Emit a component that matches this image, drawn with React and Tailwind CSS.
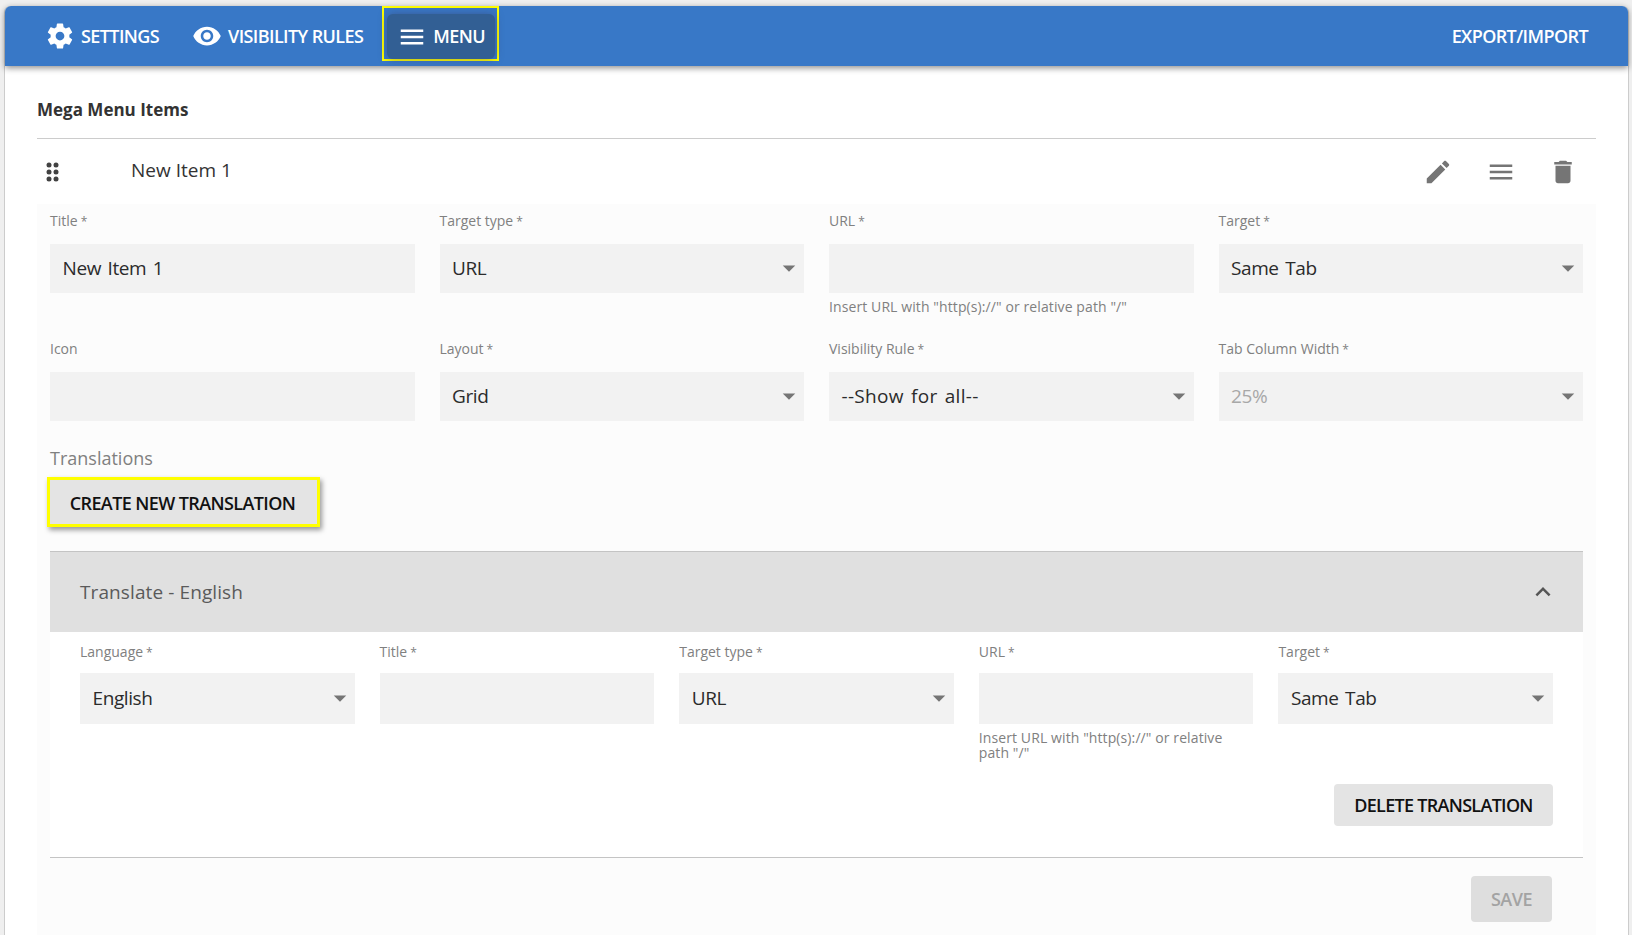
const icons = {
  settings:
    "M19.43 12.98c.04-.32.07-.64.07-.98s-.03-.66-.07-.98l2.11-1.65c.19-.15.24-.42.12-.64l-2-3.46c-.12-.22-.39-.3-.61-.22l-2.49 1c-.52-.4-1.08-.73-1.69-.98l-.38-2.65C14.46 2.18 14.25 2 14 2h-4c-.25 0-.46.18-.49.42l-.38 2.65c-.61.25-1.17.59-1.69.98l-2.49-1c-.23-.09-.49 0-.61.22l-2 3.46c-.13.22-.07.49.12.64l2.11 1.65c-.04.32-.07.65-.07.98s.03.66.07.98l-2.11 1.65c-.19.15-.24.42-.12.64l2 3.46c.12.22.39.3.61.22l2.49-1c.52.4 1.08.73 1.69.98l.38 2.65c.03.24.24.42.49.42h4c.25 0 .46-.18.49-.42l.38-2.65c.61-.25 1.17-.59 1.69-.98l2.49 1c.23.09.49 0 .61-.22l2-3.46c.12-.22.07-.49-.12-.64l-2.11-1.65zM12 15.5c-1.93 0-3.5-1.57-3.5-3.5s1.57-3.5 3.5-3.5 3.5 1.57 3.5 3.5-1.57 3.5-3.5 3.5z",
  eye: "M12 4.5C7 4.5 2.73 7.61 1 12c1.73 4.39 6 7.5 11 7.5s9.27-3.11 11-7.5c-1.73-4.39-6-7.5-11-7.5zM12 17c-2.76 0-5-2.24-5-5s2.24-5 5-5 5 2.24 5 5-2.24 5-5 5zm0-8c-1.66 0-3 1.34-3 3s1.34 3 3 3 3-1.34 3-3-1.34-3-3-3z",
  menu: "M3 18h18v-2H3v2zm0-5h18v-2H3v2zm0-7v2h18V6H3z",
  edit: "M3 17.25V21h3.75L17.81 9.94l-3.75-3.75L3 17.25zM20.71 7.04c.39-.39.39-1.02 0-1.41l-2.34-2.34c-.39-.39-1.02-.39-1.41 0l-1.83 1.83 3.75 3.75 1.83-1.83z",
  trash: "M6 19c0 1.1.9 2 2 2h8c1.1 0 2-.9 2-2V7H6v12zM19 4h-3.5l-1-1h-5l-1 1H5v2h14V4z",
  chevron: "M12 8l-6 6 1.41 1.41L12 10.83l4.59 4.58L18 14z",
  drop: "M7 10l5 5 5-5z",
};

function Icon({ name, className }) {
  return (
    <svg viewBox="0 0 24 24" fill="currentColor" className={className}>
      <path d={icons[name]} />
    </svg>
  );
}

function Field({ label, required = true, value, select, disabled, help, compact, valueClass = "tracking-[-0.4px]" }) {
  return (
    <div className="min-w-0">
      <div
        className={`-mt-[0.5px] h-5 text-[14px] leading-5 text-[#808080] ${compact ? "mb-[11.5px]" : "mb-[13.5px]"}`}
      >
        {label}
        {required && <span className="ml-[3px] text-[12px]">*</span>}
      </div>
      <div
        className={`flex items-center justify-between bg-[#f2f2f2] pl-[12.5px] ${
          compact ? "h-[51px]" : "h-[49px]"
        }`}
      >
        <span
          className={`text-[19px] [word-spacing:2px] ${valueClass} ${disabled ? "text-[#a8a8a8]" : "text-[#2b2b2b]"}`}
        >
          {value}
        </span>
        {select && <Icon name="drop" className="-mt-[2px] h-[30px] w-[30px] text-[#757575]" />}
      </div>
      {help && (
        <p
          className={`text-[14px] tracking-[0.1px] text-[#808080] ${
            compact ? "mt-[7px] pr-[30px] leading-[14.5px]" : "mt-[6px] leading-4"
          }`}
        >
          {help}
        </p>
      )}
    </div>
  );
}

export default function App() {
  return (
    <div className="h-[935px] overflow-hidden bg-[#efefef] pt-[6px] pl-[4px] pr-[3px] font-['Open_Sans',sans-serif]">
      <div className="h-full rounded-t-md border-x border-[#cccccc] bg-white">
        {/* Top tabs */}
        <header className="flex h-[60px] items-start rounded-t-md bg-[#3878c7] pl-[40px] pr-[40px] text-[18px] font-semibold tracking-[-0.6px] text-white shadow-[0_2px_6px_rgba(0,0,0,0.45)]">
          <div className="flex h-[60px] items-center gap-[6px]">
            <Icon name="settings" className="h-[30px] w-[30px]" />
            SETTINGS
          </div>
          <div className="ml-[33px] flex h-[60px] items-center gap-[6px]">
            <Icon name="eye" className="h-[30px] w-[30px]" />
            VISIBILITY RULES
          </div>
          <div className="ml-[19px] h-[55px] border-2 border-[#ffff00] pl-[3px] pr-[2px] pt-[6px]">
            <div className="flex h-[45px] items-center gap-[6px] rounded-md bg-[#325f94] pl-[10px] pr-[10px] shadow-[0_0_8px_rgba(60,60,100,0.5)]">
              <Icon name="menu" className="h-[30px] w-[30px]" />
              MENU
            </div>
          </div>
          <div className="ml-auto flex h-[60px] items-center">EXPORT/IMPORT</div>
        </header>

        <main className="px-[32px] pt-[32px]">
          <h2 className="h-6 text-[17px] font-bold leading-6 text-[#333333]">Mega Menu Items</h2>
          <div className="mt-[16px] h-px bg-[#cccccc]" />

          {/* Item row */}
          <div className="flex h-[65px] items-center pl-[9px] pr-[18px]">
            <svg viewBox="0 0 13 20" className="h-5 w-[13px] text-[#424242]" fill="currentColor">
              <circle cx="3" cy="3" r="2.5" />
              <circle cx="10" cy="3" r="2.5" />
              <circle cx="3" cy="10" r="2.5" />
              <circle cx="10" cy="10" r="2.5" />
              <circle cx="3" cy="17" r="2.5" />
              <circle cx="10" cy="17" r="2.5" />
            </svg>
            <span className="ml-[72px] pb-[2px] text-[19px] text-[#333333]">New Item 1</span>
            <div className="ml-auto flex gap-[32.5px] text-[#757575]">
              <Icon name="edit" className="h-[30px] w-[30px]" />
              <Icon name="menu" className="h-[30px] w-[30px]" />
              <Icon name="trash" className="h-[30px] w-[30px]" />
            </div>
          </div>

          <div className="bg-[#fcfcfc] px-[13px] pb-[40px] pt-[7px]">
            <div className="grid grid-cols-4 gap-x-[25px] gap-y-6">
              <Field label="Title" value="New Item 1" />
              <Field label="Target type" value="URL" select />
              <Field label="URL" help={'Insert URL with "http(s)://" or relative path "/"'} />
              <Field label="Target" value="Same Tab" select />
              <Field label="Icon" required={false} />
              <Field label="Layout" value="Grid" select />
              <Field label="Visibility Rule" value="--Show for all--" select valueClass="tracking-[0.3px]" />
              <Field label="Tab Column Width" value="25%" select disabled />
            </div>

            <div className="mt-[24px] h-[26px] text-[18px] leading-[26px] text-[#808080]">Translations</div>
            <button className="ml-[-3px] mt-[6px] flex h-[50px] w-[273px] items-center justify-center border-[3px] border-[#ffff00] bg-[#e4e4e4] pr-[2px] pt-[2px] text-[18px] font-semibold tracking-[-0.6px] text-[#111111] shadow-[2px_3px_5px_rgba(0,0,0,0.4)]">
              CREATE NEW TRANSLATION
            </button>

            {/* Translation accordion */}
            <div className="mt-6 bg-white">
              <div className="flex h-[81px] items-center justify-between border-t border-[#c4c4c4] bg-[#e0e0e0] pl-[30px] pr-[25px]">
                <span className="text-[19px] tracking-[0.1px] text-[#5a5a5a]">Translate - English</span>
                <Icon name="chevron" className="h-[30px] w-[30px] text-[#555555]" />
              </div>
              <div className="px-[30px] pb-[31px] pt-[10px]">
                <div className="grid grid-cols-5 gap-x-[25px]">
                  <Field compact label="Language" value="English" select />
                  <Field compact label="Title" />
                  <Field compact label="Target type" value="URL" select />
                  <Field compact label="URL" help={'Insert URL with "http(s)://" or relative path "/"'} />
                  <Field compact label="Target" value="Same Tab" select />
                </div>
                <div className="mt-[24px] flex justify-end">
                  <button className="h-[42px] w-[219px] rounded bg-[#e4e4e4] text-[18px] font-semibold tracking-[-0.7px] text-[#111111]">
                    DELETE TRANSLATION
                  </button>
                </div>
              </div>
            </div>
            <div className="h-px bg-[#c4c4c4]" />

            <div className="mt-[18px] flex justify-end pr-[31px]">
              <button className="h-[46px] w-[81px] rounded bg-[#dedede] text-[18px] font-semibold tracking-[-0.5px] text-[#a3a3a3]">
                SAVE
              </button>
            </div>
          </div>
        </main>
      </div>
    </div>
  );
}
